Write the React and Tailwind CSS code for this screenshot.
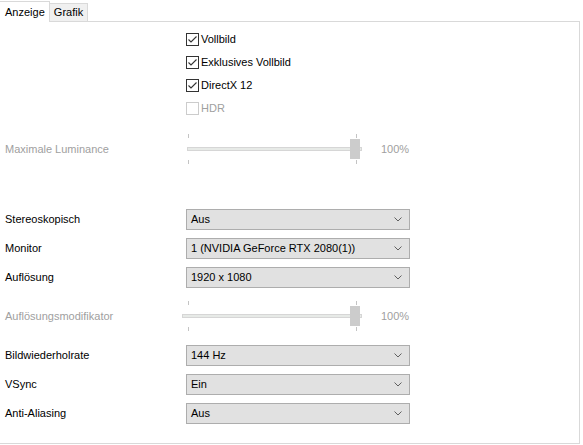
const font = { fontFamily: '"Liberation Sans", Arial, sans-serif' };

const Check = ({ label, checked = true, disabled = false }) => (
  <div className="flex items-center h-[23px] pl-[186px]">
    <div
      className={`w-[13px] h-[13px] border bg-white flex items-center justify-center ${disabled ? "border-[#cccccc]" : "border-[#333333]"}`}
    >
      {checked && (
        <svg width="11" height="11" viewBox="0 0 11 11">
          <path d="M1.5 5.5 L4 8 L9.5 2.5" fill="none" stroke="#333333" strokeWidth="1.1" />
        </svg>
      )}
    </div>
    <span className={`ml-[2px] text-[11px] ${disabled ? "text-[#a0a0a0]" : "text-black"}`}>{label}</span>
  </div>
);

const Slider = ({ label, trackStart }) => (
  <div className="flex items-center h-[34px]">
    <div className="w-[180px] pl-[5px] text-[11px] text-[#a0a0a0]">{label}</div>
    <svg width="190" height="34" viewBox="180 0 190 34">
      <line x1="188.5" y1="2" x2="188.5" y2="6" stroke="#c4c4c4" />
      <line x1="356.5" y1="2" x2="356.5" y2="6" stroke="#c4c4c4" />
      <line x1="188.5" y1="28" x2="188.5" y2="32" stroke="#c4c4c4" />
      <line x1="356.5" y1="28" x2="356.5" y2="32" stroke="#c4c4c4" />
      <rect x={trackStart + 0.5} y="15.5" width={361 - trackStart} height="3" fill="#e7eae7" stroke="#d6d6d6" />
      <rect x="350" y="7" width="10" height="20" fill="#cccccc" />
    </svg>
    <span className="ml-[11px] text-[11px] text-[#a0a0a0]">100%</span>
  </div>
);

const Select = ({ label, value }) => (
  <div className="flex items-center h-[29px]">
    <div className="w-[186px] pl-[5px] text-[11px] text-black">{label}</div>
    <div className="w-[224px] h-[21px] bg-[#e1e1e1] border border-[#adadad] flex items-center justify-between pl-[4px] pr-[7px]">
      <span className="text-[11px] text-black">{value}</span>
      <svg width="8" height="5" viewBox="0 0 8 5">
        <path d="M0.5 0.5 L4 4 L7.5 0.5" fill="none" stroke="#606060" strokeWidth="1" />
      </svg>
    </div>
  </div>
);

export default function App() {
  return (
    <div className="w-[583px] h-[445px] bg-white relative" style={font}>
      {/* Tabs */}
      <div className="flex h-[21px] items-end">
        <div className="h-[21px] w-[50px] bg-white border-t border-r border-[#d9d9d9] flex items-center pl-[5px] text-[11px] text-black relative top-[1px]">
          Anzeige
        </div>
        <div className="h-[18px] w-[38px] bg-[#f0f0f0] border-t border-r border-[#d9d9d9] flex items-center justify-center text-[11px] text-black">
          Grafik
        </div>
      </div>

      {/* Panel */}
      <div className="w-[580px] h-[423px] border-t border-r border-b border-[#d9d9d9] pt-[6px]">
        <Check label="Vollbild" />
        <Check label="Exklusives Vollbild" />
        <Check label="DirectX 12" />
        <Check label="HDR" checked={false} disabled />

        <div className="mt-[12px]">
          <Slider label="Maximale Luminance" trackStart={187} />
        </div>

        <div className="mt-[39px]">
          <Select label="Stereoskopisch" value="Aus" />
          <Select label="Monitor" value="1 (NVIDIA GeForce RTX 2080(1))" />
          <Select label="Auflösung" value="1920 x 1080" />
        </div>

        <div className="mt-[7px]">
          <Slider label="Auflösungsmodifikator" trackStart={182} />
        </div>

        <div className="mt-[8px]">
          <Select label="Bildwiederholrate" value="144 Hz" />
          <Select label="VSync" value="Ein" />
          <Select label="Anti-Aliasing" value="Aus" />
        </div>
      </div>
    </div>
  );
}
